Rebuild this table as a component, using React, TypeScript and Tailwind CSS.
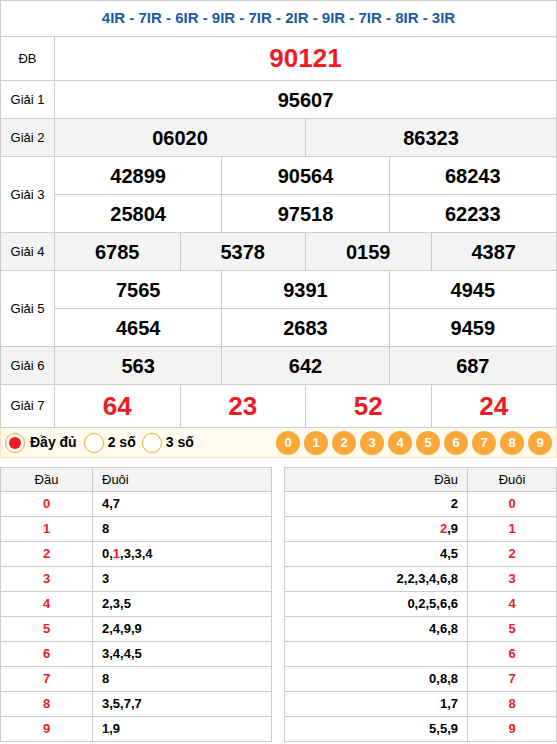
import React from "react";

const F = { fontFamily: '"Liberation Sans", Arial, sans-serif' };

type Row = { label: string; nums: string[][]; gray?: boolean; h: string; big?: boolean };

const rows: Row[] = [
  { label: "ĐB", nums: [["90121"]], h: "h-[44px]", big: true },
  { label: "Giải 1", nums: [["95607"]], h: "h-[38px]" },
  { label: "Giải 2", nums: [["06020", "86323"]], gray: true, h: "h-[38px]" },
  { label: "Giải 3", nums: [["42899", "90564", "68243"], ["25804", "97518", "62233"]], h: "h-[38px]" },
  { label: "Giải 4", nums: [["6785", "5378", "0159", "4387"]], gray: true, h: "h-[38px]" },
  { label: "Giải 5", nums: [["7565", "9391", "4945"], ["4654", "2683", "9459"]], h: "h-[38px]" },
  { label: "Giải 6", nums: [["563", "642", "687"]], gray: true, h: "h-[38px]" },
  { label: "Giải 7", nums: [["64", "23", "52", "24"]], h: "h-[43px]", big: true },
];

const left: [string, React.ReactNode][] = [
  ["0", "4,7"],
  ["1", "8"],
  ["2", <>0,<span className="text-[#ed1c24]">1</span>,3,3,4</>],
  ["3", "3"],
  ["4", "2,3,5"],
  ["5", "2,4,9,9"],
  ["6", "3,4,4,5"],
  ["7", "8"],
  ["8", "3,5,7,7"],
  ["9", "1,9"],
];

const right: [React.ReactNode, string][] = [
  ["2", "0"],
  [<><span className="text-[#ed1c24]">2</span>,9</>, "1"],
  ["4,5", "2"],
  ["2,2,3,4,6,8", "3"],
  ["0,2,5,6,6", "4"],
  ["4,6,8", "5"],
  ["", "6"],
  ["0,8,8", "7"],
  ["1,7", "8"],
  ["5,5,9", "9"],
];

export default function App() {
  return (
    <div className="w-[557px] bg-white text-black" style={F}>
      <div className="border-t border-l border-[#cccccc]">
        <div className="h-[36px] flex items-center justify-center border-b border-r border-[#cccccc] text-[15px] font-bold text-[#1c5aa6]">
          4IR - 7IR - 6IR - 9IR - 7IR - 2IR - 9IR - 7IR - 8IR - 3IR
        </div>
        {rows.map((r) => (
          <div key={r.label} className={"flex " + (r.gray ? "bg-[#f3f3f3]" : "bg-white")}>
            <div className="w-[54px] shrink-0 flex items-center justify-center border-r border-b border-[#cccccc] text-[13px]">
              {r.label}
            </div>
            <div className="flex-1 flex flex-col">
              {r.nums.map((line, i) => (
                <div key={i} className={"flex " + r.h}>
                  {line.map((n, j) => (
                    <div
                      key={j}
                      className={
                        "flex-1 basis-0 flex items-center justify-center border-r border-b border-[#cccccc] font-bold " +
                        (r.big ? "text-[26px] text-[#ed1c24]" : "text-[20px]")
                      }
                    >
                      {n}
                    </div>
                  ))}
                </div>
              ))}
            </div>
          </div>
        ))}
      </div>
      <div className="h-[30px] flex items-center justify-between bg-[#fffaf0] border-x border-b border-[#fde4bd] pl-[4px] pr-[4px]">
        <div className="flex items-center text-[14px] font-bold">
          <span className="w-[20px] h-[20px] rounded-full border border-[#f5a623] bg-white flex items-center justify-center">
            <span className="w-[12px] h-[12px] rounded-full bg-[#ed1c24]" />
          </span>
          <span className="ml-[5px]">Đầy đủ</span>
          <span className="ml-[7px] w-[20px] h-[20px] rounded-full border border-[#f5a623] bg-white" />
          <span className="ml-[4px]">2 số</span>
          <span className="ml-[6px] w-[20px] h-[20px] rounded-full border border-[#f5a623] bg-white" />
          <span className="ml-[4px]">3 số</span>
        </div>
        <div className="flex gap-[4px]">
          {["0", "1", "2", "3", "4", "5", "6", "7", "8", "9"].map((d) => (
            <span
              key={d}
              className="w-[24px] h-[24px] rounded-full bg-[#f8a93a] text-white text-[13px] font-bold flex items-center justify-center"
            >
              {d}
            </span>
          ))}
        </div>
      </div>
      <div className="flex justify-between mt-[9px]">
        <div className="w-[272px] border-t border-l border-[#cccccc] text-[13px]">
          <div className="flex h-[24px] bg-[#f3f3f3]">
            <div className="w-[92px] border-r border-b border-[#cccccc] flex items-center justify-center">Đầu</div>
            <div className="flex-1 border-r border-b border-[#cccccc] flex items-center pl-[9px]">Đuôi</div>
          </div>
          {left.map(([h, t]) => (
            <div key={h} className="flex h-[25px] font-bold">
              <div className="w-[92px] border-r border-b border-[#cccccc] flex items-center justify-center text-[#ed1c24]">{h}</div>
              <div className="flex-1 border-r border-b border-[#cccccc] flex items-center pl-[9px]">{t}</div>
            </div>
          ))}
        </div>
        <div className="w-[273px] border-t border-l border-[#cccccc] text-[13px]">
          <div className="flex h-[24px] bg-[#f3f3f3]">
            <div className="w-[183px] border-r border-b border-[#cccccc] flex items-center justify-end pr-[9px]">Đầu</div>
            <div className="flex-1 border-r border-b border-[#cccccc] flex items-center justify-center">Đuôi</div>
          </div>
          {right.map(([t, h]) => (
            <div key={h} className="flex h-[25px] font-bold">
              <div className="w-[183px] border-r border-b border-[#cccccc] flex items-center justify-end pr-[9px]">{t}</div>
              <div className="flex-1 border-r border-b border-[#cccccc] flex items-center justify-center text-[#ed1c24]">{h}</div>
            </div>
          ))}
        </div>
      </div>
    </div>
  );
}
